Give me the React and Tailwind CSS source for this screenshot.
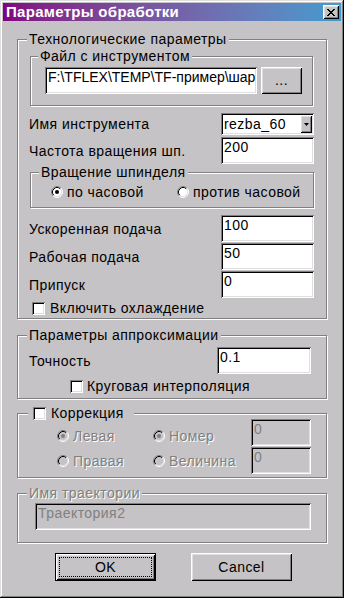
const SUNKEN = 'shadow-[inset_1px_1px_0_#808080,inset_-1px_-1px_0_#fff,inset_2px_2px_0_#000,inset_-2px_-2px_0_#dfdfdf]';
const RAISED = 'shadow-[inset_1px_1px_0_#fff,inset_-1px_-1px_0_#000,inset_2px_2px_0_#dfdfdf,inset_-2px_-2px_0_#808080]';
const ETCHED = 'border border-[#808080] shadow-[1px_1px_0_#fff,inset_1px_1px_0_#fff]';
const DIS = 'text-[#808080] [text-shadow:1px_1px_0_#fff]';

function Group({ legend, legendClass = 'ml-[9px] px-[2px]', className = '', children }) {
  return (
    <fieldset className={`${ETCHED} ${className}`}>
      <legend className={`bg-[#c6c3c6] leading-[16px] ${legendClass}`}>{legend}</legend>
      {children}
    </fieldset>
  );
}

function Edit({ children, className = '', disabled = false }) {
  return (
    <div
      className={`h-[27px] shrink-0 overflow-hidden whitespace-nowrap pl-[3px] pt-[2px] leading-[16px] ${
        disabled ? 'bg-[#c6c3c6] text-[#808080]' : 'bg-white'
      } ${SUNKEN} ${className}`}
    >
      {children}
    </div>
  );
}

function Row({ label, className = '', children }) {
  return (
    <div className={`flex items-center justify-between ${className}`}>
      <span>{label}</span>
      {children}
    </div>
  );
}

function Check() {
  return <div className={`w-[13px] h-[13px] shrink-0 bg-white ${SUNKEN}`} />;
}

function Radio({ checked = false, disabled = false }) {
  return (
    <svg width="12" height="12" viewBox="0 0 12 12" className="shrink-0">
      <circle cx="6" cy="6" r="5" fill={disabled ? '#c6c3c6' : '#fff'} />
      <path d="M2.11 9.89A5.5 5.5 0 0 1 9.89 2.11" fill="none" stroke="#808080" />
      <path d="M9.89 2.11A5.5 5.5 0 0 1 2.11 9.89" fill="none" stroke="#fff" />
      <path d="M2.82 9.18A4.5 4.5 0 0 1 9.18 2.82" fill="none" stroke="#000" />
      <path d="M9.18 2.82A4.5 4.5 0 0 1 2.82 9.18" fill="none" stroke="#dfdfdf" />
      {checked && <circle cx="6" cy="6" r="2" fill={disabled ? '#808080' : '#000'} />}
    </svg>
  );
}

function RadioItem({ label, checked, disabled, className = '' }) {
  return (
    <div className={`flex items-center gap-[4px] h-[16px] ${className}`}>
      <Radio checked={checked} disabled={disabled} />
      <span className={disabled ? DIS : ''}>{label}</span>
    </div>
  );
}

export default function App() {
  return (
    <div className="w-[344px] h-[598px] bg-[#c6c3c6] p-[3px] font-['Liberation_Sans',Arial,sans-serif] text-[14px] leading-[16px] tracking-[0.45px] text-black shadow-[inset_-1px_-1px_0_#000,inset_1px_1px_0_#dfdfdf,inset_-2px_-2px_0_#808080,inset_2px_2px_0_#fff]">
      <div className="h-[18px] flex items-center justify-between pl-[3px] pr-[2px] bg-linear-to-r from-[#800080] to-[#3c9cd0]">
        <span className="text-white font-bold text-[15px] tracking-[0.3px]">Параметры обработки</span>
        <div className={`w-[16px] h-[14px] bg-[#c6c3c6] flex items-center justify-center ${RAISED}`}>
          <svg width="8" height="7" viewBox="0 0 8 7" shapeRendering="crispEdges">
            <path d="M0 0h2v1h-2z M6 0h2v1h-2z M1 1h2v1h-2z M5 1h2v1h-2z M2 2h4v1h-4z M3 3h2v1h-2z M2 4h4v1h-4z M1 5h2v1h-2z M5 5h2v1h-2z M0 6h2v1h-2z M6 6h2v1h-2z" fill="#000" />
          </svg>
        </div>
      </div>

      <div className="px-[14px] pt-[10px]">
        <Group legend="Технологические параметры">
          <div className="pl-[11px] pr-[12px] pb-[2px]">
            <Group legend="Файл с инструментом" legendClass="ml-[7px] px-[2px]" className="mt-px mx-px">
              <div className="flex gap-[4px] pl-[14px] pt-[3px] pb-[11px]">
                <Edit className="w-[212px] tracking-normal">F:\TFLEX\TEMP\TF-пример\шар</Edit>
                <div className={`w-[41px] h-[27px] flex items-center justify-center pb-[2px] ${RAISED}`}>...</div>
              </div>
            </Group>

            <Row label="Имя инструмента" className="mt-[7px]">
              <div className={`w-[93px] h-[22px] bg-white flex items-stretch pl-[3px] pr-[2px] py-[2px] ${SUNKEN}`}>
                <span className="flex-1 flex items-center">rezba_60</span>
                <div className={`w-[12px] bg-[#c6c3c6] flex items-center justify-center ${RAISED}`}>
                  <svg width="5" height="3" viewBox="0 0 5 3">
                    <path d="M0 0H5L2.5 3Z" fill="#000" />
                  </svg>
                </div>
              </div>
            </Row>
            <Row label="Частота вращения шп." className="mt-[2px]">
              <Edit className="w-[93px]">200</Edit>
            </Row>

            <Group legend="Вращение шпинделя" legendClass="ml-[8px] px-[2px]" className="ml-px">
              <div className="flex pl-[20px] pt-[4px] pb-[7px]">
                <RadioItem label="по часовой" checked className="w-[126px]" />
                <RadioItem label="против часовой" />
              </div>
            </Group>

            <Row label="Ускоренная подача" className="mt-[7px]">
              <Edit className="w-[93px]">100</Edit>
            </Row>
            <Row label="Рабочая подача" className="mt-px">
              <Edit className="w-[93px]">50</Edit>
            </Row>
            <Row label="Припуск" className="mt-px">
              <Edit className="w-[93px]">0</Edit>
            </Row>
            <div className="flex items-center gap-[5px] h-[16px] mt-[2px] ml-[3px]">
              <Check />
              <span>Включить охлаждение</span>
            </div>
          </div>
        </Group>

        <Group legend="Параметры аппроксимации" className="mt-[8px]">
          <div className="pl-[11px] pr-[15px] pb-[4px]">
            <Row label="Точность" className="mt-[4px]">
              <Edit className="w-[94px]">0.1</Edit>
            </Row>
            <div className="flex items-center gap-[4px] h-[16px] mt-[4px] ml-[41px]">
              <Check />
              <span>Круговая интерполяция</span>
            </div>
          </div>
        </Group>

        <Group
          legend={
            <>
              <Check />
              <span>Коррекция</span>
            </>
          }
          legendClass="ml-[10px] pl-[5px] pr-[10px] flex items-center gap-[5px] h-[16px]"
          className="mt-[6px]"
        >
          <div className="flex justify-between pl-[39px] pr-[15px] pb-[3px]">
            <div className="flex flex-col pt-[7px] gap-[9px]">
              <div className="flex">
                <RadioItem label="Левая" checked disabled className="w-[96px]" />
                <RadioItem label="Номер" checked disabled />
              </div>
              <div className="flex">
                <RadioItem label="Правая" disabled className="w-[96px]" />
                <RadioItem label="Величина" disabled />
              </div>
            </div>
            <div className="flex flex-col -mt-[2px] gap-px">
              <Edit disabled className="w-[60px]">0</Edit>
              <Edit disabled className="w-[60px]">0</Edit>
            </div>
          </div>
        </Group>

        <Group legend={<span className={DIS}>Имя траектории</span>} className="mt-[7px]">
          <div className="pl-[17px] pr-[15px] pt-[2px] pb-[12px]">
            <Edit disabled className="w-full">Траектория2</Edit>
          </div>
        </Group>

        <div className="flex gap-[35px] pl-[38px] mt-[10px]">
          <div className="w-[101px] h-[28px] border border-black">
            <div className={`h-full p-[3px] ${RAISED}`}>
              <div className="h-full border border-dotted border-black flex items-center justify-center">OK</div>
            </div>
          </div>
          <div className={`w-[101px] h-[28px] flex items-center justify-center ${RAISED}`}>Cancel</div>
        </div>
      </div>
    </div>
  );
}
